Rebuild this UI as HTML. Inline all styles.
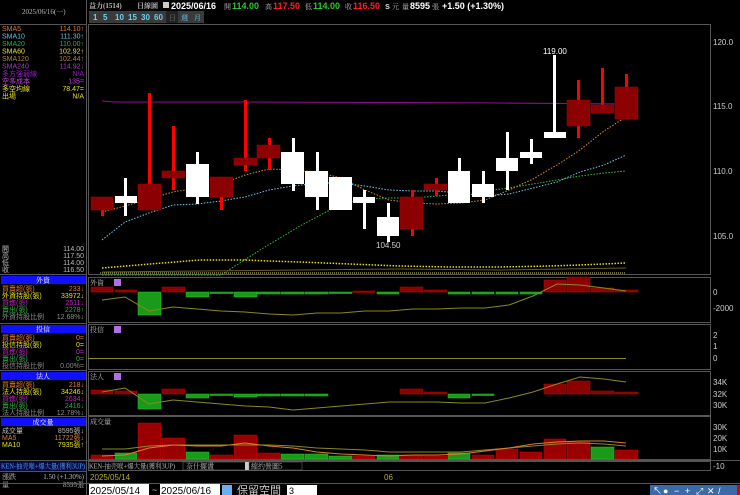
<!DOCTYPE html>
<html><head><meta charset="utf-8"><style>
html,body{margin:0;padding:0;background:#000;width:740px;height:495px;overflow:hidden}
svg text{font-family:"Liberation Sans","Noto Sans CJK TC",sans-serif}
.s{font-family:"Liberation Serif","Noto Serif CJK SC",serif;font-size:7px}
</style></head><body>
<svg width="740" height="495" viewBox="0 0 740 495" xmlns="http://www.w3.org/2000/svg">
<rect width="740" height="495" fill="#000"/>
<line x1="86.5" y1="0" x2="86.5" y2="495" stroke="#555"/>
<text x="22" y="14" class="s" fill="#bbb">2025/06/16(一)</text>
<line x1="0" y1="24.5" x2="86" y2="24.5" stroke="#555"/>
<g class="s">
<text x="2" y="31" fill="#e07a30">SMA5</text><text x="84" y="31" fill="#e07a30" text-anchor="end">114.10↑</text>
<text x="2" y="38.5" fill="#5ec8e8">SMA10</text><text x="84" y="38.5" fill="#5ec8e8" text-anchor="end">111.30↑</text>
<text x="2" y="46" fill="#2ab040">SMA20</text><text x="84" y="46" fill="#2ab040" text-anchor="end">110.00↑</text>
<text x="2" y="53.5" fill="#e8e030">SMA60</text><text x="84" y="53.5" fill="#e8e030" text-anchor="end">102.92↑</text>
<text x="2" y="61" fill="#b08040">SMA120</text><text x="84" y="61" fill="#b08040" text-anchor="end">102.44↑</text>
<text x="2" y="68.5" fill="#a040c0">SMA240</text><text x="84" y="68.5" fill="#a040c0" text-anchor="end">114.92↓</text>
<text x="2" y="76" fill="#9020c0">多方強弱線</text><text x="84" y="76" fill="#9020c0" text-anchor="end">N/A</text>
<text x="2" y="83.5" fill="#c040e0">空多成本</text><text x="84" y="83.5" fill="#c040e0" text-anchor="end">135=</text>
<text x="2" y="91" fill="#e0e020">多空均線</text><text x="84" y="91" fill="#e0e020" text-anchor="end">78.47=</text>
<text x="2" y="98.5" fill="#e0e020">出場</text><text x="84" y="98.5" fill="#e0e020" text-anchor="end">N/A</text>
<text x="2" y="251" fill="#bbb">開</text><text x="84" y="251" fill="#bbb" text-anchor="end">114.00</text>
<text x="2" y="258" fill="#bbb">高</text><text x="84" y="258" fill="#bbb" text-anchor="end">117.50</text>
<text x="2" y="265" fill="#bbb">低</text><text x="84" y="265" fill="#bbb" text-anchor="end">114.00</text>
<text x="2" y="272" fill="#bbb">收</text><text x="84" y="272" fill="#bbb" text-anchor="end">116.50</text>
</g>
<g>
<rect x="1" y="276" width="85" height="8" fill="#1010ff"/><text x="43" y="282.5" class="s" fill="#fff" text-anchor="middle">外資</text>
<rect x="1" y="325" width="85" height="8" fill="#1010ff"/><text x="43" y="331.5" class="s" fill="#fff" text-anchor="middle">投信</text>
<rect x="1" y="372" width="85" height="8" fill="#1010ff"/><text x="43" y="378.5" class="s" fill="#fff" text-anchor="middle">法人</text>
<rect x="1" y="418" width="85" height="8" fill="#1010ff"/><text x="43" y="424.5" class="s" fill="#fff" text-anchor="middle">成交量</text>
<line x1="0" y1="274.5" x2="86" y2="274.5" stroke="#555"/>
<line x1="0" y1="323.5" x2="86" y2="323.5" stroke="#555"/>
<line x1="0" y1="370.5" x2="86" y2="370.5" stroke="#555"/>
<line x1="0" y1="416.5" x2="86" y2="416.5" stroke="#555"/>
</g>
<g class="s">
<text x="2" y="291" fill="#e07a30">買賣超(張)</text><text x="84" y="291" fill="#e07a30" text-anchor="end">233↓</text>
<text x="2" y="298" fill="#e0e020">外資持股(張)</text><text x="84" y="298" fill="#e0e020" text-anchor="end">33972↓</text>
<text x="2" y="305" fill="#c020c0">買進(張)</text><text x="84" y="305" fill="#c020c0" text-anchor="end">2511↓</text>
<text x="2" y="312" fill="#2ab040">賣出(張)</text><text x="84" y="312" fill="#2ab040" text-anchor="end">2278↑</text>
<text x="2" y="319" fill="#888">外資持股比例</text><text x="84" y="319" fill="#888" text-anchor="end">12.68%↓</text>
<text x="2" y="340" fill="#e07a30">買賣超(張)</text><text x="84" y="340" fill="#e07a30" text-anchor="end">0=</text>
<text x="2" y="347" fill="#e0e020">投信持股(張)</text><text x="84" y="347" fill="#e0e020" text-anchor="end">0=</text>
<text x="2" y="354" fill="#c020c0">買進(張)</text><text x="84" y="354" fill="#c020c0" text-anchor="end">0=</text>
<text x="2" y="361" fill="#2ab040">賣出(張)</text><text x="84" y="361" fill="#2ab040" text-anchor="end">0=</text>
<text x="2" y="368" fill="#888">投信持股比例</text><text x="84" y="368" fill="#888" text-anchor="end">0.00%=</text>
<text x="2" y="387" fill="#e07a30">買賣超(張)</text><text x="84" y="387" fill="#e07a30" text-anchor="end">218↓</text>
<text x="2" y="394" fill="#e0e020">法人持股(張)</text><text x="84" y="394" fill="#e0e020" text-anchor="end">34246↓</text>
<text x="2" y="401" fill="#c020c0">買進(張)</text><text x="84" y="401" fill="#c020c0" text-anchor="end">2634↓</text>
<text x="2" y="408" fill="#2ab040">賣出(張)</text><text x="84" y="408" fill="#2ab040" text-anchor="end">2416↓</text>
<text x="2" y="415" fill="#888">法人持股比例</text><text x="84" y="415" fill="#888" text-anchor="end">12.78%↓</text>
<text x="2" y="433" fill="#bbb">成交量</text><text x="84" y="433" fill="#bbb" text-anchor="end">8595張↓</text>
<text x="2" y="440" fill="#e07a30">MA5</text><text x="84" y="440" fill="#e07a30" text-anchor="end">11722張↓</text>
<text x="2" y="447" fill="#e0e020">MA10</text><text x="84" y="447" fill="#e0e020" text-anchor="end">7935張↑</text>
</g>
<line x1="0" y1="460.5" x2="740" y2="460.5" stroke="#555"/>
<rect x="0" y="461" width="86" height="10" fill="#0a0a40"/>
<text x="1" y="468.5" class="s" fill="#4aa0ff" textLength="84" lengthAdjust="spacingAndGlyphs">KEN-抽壳喉+爆大量(獲利3UP)</text>
<line x1="0" y1="471.5" x2="86" y2="471.5" stroke="#555"/>
<text x="2" y="479" class="s" fill="#bbb">漲跌</text><text x="84" y="479" class="s" fill="#bbb" text-anchor="end">1.50 (+1.30%)</text>
<text x="2" y="487" class="s" fill="#bbb">量</text><text x="84" y="487" class="s" fill="#bbb" text-anchor="end">8595張</text>

<g font-size="9" font-weight="bold">
<text x="89" y="8" class="s" fill="#bbb">益力(1514)</text>
<text x="137" y="8" class="s" fill="#bbb">日線圖</text>
<rect x="163" y="2" width="6" height="6" fill="#ccc"/>
<text x="171" y="9" fill="#fff">2025/06/16</text>
<text x="224" y="9" class="s" fill="#bbb" font-weight="normal">開</text><text x="232" y="9" fill="#2ec82e">114.00</text>
<text x="265" y="9" class="s" fill="#bbb" font-weight="normal">高</text><text x="273" y="9" fill="#ff2020">117.50</text>
<text x="305" y="9" class="s" fill="#bbb" font-weight="normal">低</text><text x="313" y="9" fill="#2ec82e">114.00</text>
<text x="345" y="9" class="s" fill="#bbb" font-weight="normal">收</text><text x="353" y="9" fill="#ff2020">116.50</text>
<text x="385" y="9" fill="#ccc">s</text>
<text x="392" y="9" class="s" fill="#bbb" font-weight="normal">元</text>
<text x="402" y="9" class="s" fill="#bbb" font-weight="normal">量</text><text x="410" y="9" fill="#fff">8595</text>
<text x="432" y="9" class="s" fill="#bbb" font-weight="normal">張</text>
<text x="442" y="9" fill="#fff">+1.50 (+1.30%)</text>
</g>
<rect x="89" y="11" width="115" height="12" fill="#3a3a3a"/>
<g font-size="8" font-weight="bold" fill="#6ad0f0">
<text x="93" y="20">1</text><text x="103" y="20">5</text><text x="115" y="20">10</text><text x="128" y="20">15</text><text x="141" y="20">30</text><text x="154" y="20">60</text>
</g>
<rect x="166" y="11" width="12" height="12" fill="#222"/>
<text x="169" y="20" class="s" fill="#777">日</text><text x="181" y="20" class="s" fill="#6ad0f0">週</text><text x="194" y="20" class="s" fill="#6ad0f0">月</text>

<rect x="88.5" y="24.5" width="622" height="250" fill="none" stroke="#555"/>
<g font-size="8" fill="#ccc"><text x="713" y="45">120.0</text><text x="713" y="109">115.0</text><text x="713" y="174">110.0</text><text x="713" y="239">105.0</text></g>
<polyline points="102,101 115,102 200,102 250,102 400,102.5 500,103 628,104" fill="none" stroke="#901090" stroke-width="1"/>
<polyline points="102,212 125,206 149,199 173,192 197,188 221,184 245,175 269,169 293,170 317,172 341,178 365,190 389,200 413,203 437,204 461,203 485,200 509,190 533,179 557,165 580,150 604,131 626,117" fill="none" stroke="#e08a30" stroke-width="1" stroke-dasharray="1.5 1.5"/>
<polyline points="102,240 125,222 149,213 173,205 197,204 221,201 245,197 269,190 293,186 317,183 341,183 365,186 389,190 413,191 437,191 461,193 485,196 509,194 533,188 557,182 580,172 604,165 626,155" fill="none" stroke="#70c8e8" stroke-width="1" stroke-dasharray="1.5 1.5"/>
<polyline points="102,275 180,275 221,275 260,250 300,226 330,210 360,199 389,198 413,198 437,196 461,194 485,191 509,188 533,184 557,180 580,176 604,173 626,171" fill="none" stroke="#30c040" stroke-width="1" stroke-dasharray="1.5 1.5"/>
<polyline points="102,268 150,264 200,260 245,260 269,261 300,262 350,264 400,266 450,267 500,267 550,266 580,265 626,263" fill="none" stroke="#e0e020" stroke-width="1.5" stroke-dasharray="1.5 1.5"/>
<polyline points="102,272 200,271 300,270 400,269 500,270 626,268" fill="none" stroke="#6a5a30" stroke-width="1"/>
<line x1="100" y1="273" x2="626" y2="273" stroke="#909040" stroke-width="1.5" stroke-dasharray="1 1"/>
<g>
<rect x="101" y="206" width="3" height="10" fill="#f00"/><rect x="91" y="197" width="22" height="13" fill="#8b0000" stroke="#a00" stroke-width=".5"/>
<rect x="124" y="178" width="3" height="38" fill="#fff"/><rect x="115" y="196" width="22" height="7" fill="#fff"/>
<rect x="148" y="93" width="3" height="95" fill="#f00"/><rect x="138" y="184" width="23" height="26" fill="#8b0000" stroke="#a00" stroke-width=".5"/>
<rect x="172" y="126" width="3" height="64" fill="#f00"/><rect x="162" y="171" width="23" height="7" fill="#8b0000" stroke="#a00" stroke-width=".5"/>
<rect x="196" y="152" width="3" height="52" fill="#fff"/><rect x="186" y="164" width="23" height="33" fill="#fff"/>
<rect x="220" y="195" width="3" height="15" fill="#f00"/><rect x="210" y="177" width="23" height="20" fill="#8b0000" stroke="#a00" stroke-width=".5"/>
<rect x="244" y="100" width="3" height="71" fill="#f00"/><rect x="234" y="158" width="23" height="7" fill="#8b0000" stroke="#a00" stroke-width=".5"/>
<rect x="268" y="138" width="3" height="32" fill="#f00"/><rect x="257" y="145" width="23" height="13" fill="#8b0000" stroke="#a00" stroke-width=".5"/>
<rect x="292" y="138" width="3" height="53" fill="#fff"/><rect x="281" y="152" width="23" height="32" fill="#fff"/>
<rect x="316" y="152" width="3" height="58" fill="#fff"/><rect x="305" y="171" width="23" height="26" fill="#fff"/>
<rect x="329" y="177" width="23" height="33" fill="#fff"/>
<rect x="363" y="190" width="3" height="39" fill="#fff"/><rect x="353" y="197" width="22" height="6" fill="#fff"/>
<rect x="387" y="203" width="3" height="39" fill="#fff"/><rect x="377" y="217" width="22" height="19" fill="#fff"/>
<rect x="411" y="190" width="3" height="46" fill="#f00"/><rect x="400" y="197" width="23" height="32" fill="#8b0000" stroke="#a00" stroke-width=".5"/>
<rect x="435" y="178" width="3" height="18" fill="#f00"/><rect x="424" y="184" width="23" height="6" fill="#8b0000" stroke="#a00" stroke-width=".5"/>
<rect x="458" y="158" width="3" height="45" fill="#fff"/><rect x="448" y="171" width="22" height="32" fill="#fff"/>
<rect x="482" y="171" width="3" height="32" fill="#fff"/><rect x="472" y="184" width="22" height="13" fill="#fff"/>
<rect x="506" y="132" width="3" height="58" fill="#fff"/><rect x="496" y="158" width="22" height="13" fill="#fff"/>
<rect x="530" y="139" width="3" height="25" fill="#fff"/><rect x="520" y="152" width="22" height="6" fill="#fff"/>
<rect x="553" y="55" width="3" height="83" fill="#fff"/><rect x="544" y="132" width="22" height="6" fill="#fff"/>
<rect x="577" y="80" width="3" height="58" fill="#f00"/><rect x="567" y="100" width="23" height="26" fill="#8b0000" stroke="#a00" stroke-width=".5"/>
<rect x="601" y="68" width="3" height="40" fill="#f00"/><rect x="591" y="105" width="23" height="8" fill="#8b0000" stroke="#a00" stroke-width=".5"/>
<rect x="625" y="74" width="3" height="14" fill="#f00"/><rect x="615" y="87" width="23" height="32" fill="#8b0000" stroke="#a00" stroke-width=".5"/>
</g>
<text x="543" y="54" font-size="8" fill="#fff">119.00</text>
<text x="376" y="248" font-size="8" fill="#ccc">104.50</text>

<rect x="88.5" y="277.5" width="622" height="45" fill="none" stroke="#555"/>
<text x="90" y="285" class="s" fill="#bbb">外資</text><rect x="114" y="279" width="7" height="7" fill="#b070e0"/>
<g fill="#8b0000" stroke="#c00" stroke-width=".5">
<rect x="91" y="287" width="22" height="5"/><rect x="115" y="290" width="22" height="2"/><rect x="162" y="287" width="23" height="5"/>
<rect x="353" y="291" width="22" height="1.5"/><rect x="400" y="287" width="23" height="5"/><rect x="424" y="290" width="23" height="2"/>
<rect x="544" y="280" width="22" height="12"/><rect x="567" y="277" width="23" height="15"/><rect x="591" y="288" width="23" height="4"/><rect x="615" y="290" width="23" height="2"/>
</g>
<g fill="#1a9a1a" stroke="#2c2" stroke-width=".5">
<rect x="138" y="292" width="23" height="23"/><rect x="186" y="292" width="23" height="5"/><rect x="210" y="292" width="23" height="1.5"/>
<rect x="234" y="292" width="23" height="5"/><rect x="257" y="292" width="23" height="2"/><rect x="281" y="292" width="23" height="2"/>
<rect x="305" y="292" width="23" height="2"/><rect x="329" y="292" width="23" height="1.5"/><rect x="377" y="292" width="22" height="2"/>
<rect x="448" y="292" width="22" height="2"/><rect x="472" y="292" width="22" height="2"/><rect x="496" y="292" width="22" height="2"/><rect x="520" y="292" width="22" height="2"/>
</g>
<polyline points="102,300 125,297 149,311 173,307 197,309 221,311 245,312 269,314 293,315 317,313 341,313 365,311 389,311 413,309 437,309 461,308 485,308 509,305 533,296 557,284 580,285 604,288 626,291" fill="none" stroke="#8a8a20" stroke-width="1"/>
<g font-size="8" fill="#ccc"><text x="713" y="295">0</text><text x="713" y="311">-2000</text></g>

<rect x="88.5" y="324.5" width="622" height="45" fill="none" stroke="#555"/>
<text x="90" y="332" class="s" fill="#bbb">投信</text><rect x="114" y="326" width="7" height="7" fill="#b070e0"/>
<line x1="88" y1="358.5" x2="626" y2="358.5" stroke="#8a8a20"/>
<g font-size="8" fill="#ccc"><text x="713" y="338">2</text><text x="713" y="349">1</text><text x="713" y="361">0</text></g>

<rect x="88.5" y="371.5" width="622" height="44" fill="none" stroke="#555"/>
<text x="90" y="379" class="s" fill="#bbb">法人</text><rect x="114" y="373" width="7" height="7" fill="#b070e0"/>
<g fill="#8b0000" stroke="#c00" stroke-width=".5">
<rect x="91" y="390" width="22" height="4"/><rect x="115" y="391" width="22" height="3"/><rect x="162" y="389" width="23" height="5"/>
<rect x="400" y="389" width="23" height="5"/><rect x="424" y="392" width="23" height="2"/><rect x="544" y="384" width="22" height="10"/>
<rect x="567" y="381" width="23" height="13"/><rect x="591" y="391" width="23" height="3"/><rect x="615" y="392" width="23" height="2"/>
</g>
<g fill="#1a9a1a" stroke="#2c2" stroke-width=".5">
<rect x="138" y="394" width="23" height="15"/><rect x="186" y="394" width="23" height="4"/><rect x="210" y="394" width="23" height="1.5"/>
<rect x="234" y="394" width="23" height="3"/><rect x="257" y="394" width="23" height="2"/><rect x="281" y="394" width="23" height="2"/><rect x="305" y="394" width="23" height="2"/>
<rect x="448" y="394" width="22" height="4"/><rect x="472" y="394" width="22" height="1.5"/>
</g>
<polyline points="102,392 125,388 149,404 173,400 197,402 221,404 245,406 269,407 293,410 317,408 341,406 365,404 389,402 413,402 437,402 461,403 485,403 509,398 533,392 557,384 580,377 604,379 626,382" fill="none" stroke="#8a8a20" stroke-width="1"/>
<g font-size="8" fill="#ccc"><text x="713" y="385">34K</text><text x="713" y="397">32K</text><text x="713" y="408">30K</text></g>

<rect x="88.5" y="416.5" width="622" height="43" fill="none" stroke="#555"/>
<text x="90" y="424" class="s" fill="#bbb">成交量</text>
<g fill="#9b0000" stroke="#c00" stroke-width=".5">
<rect x="91" y="455" width="22" height="4"/><rect x="138" y="423" width="23" height="36"/><rect x="162" y="438" width="23" height="21"/>
<rect x="210" y="455" width="23" height="4"/><rect x="234" y="435" width="23" height="24"/><rect x="257" y="453" width="23" height="6"/>
<rect x="353" y="456" width="22" height="3"/><rect x="400" y="455" width="23" height="4"/><rect x="424" y="456" width="23" height="3"/>
<rect x="472" y="455" width="22" height="4"/><rect x="496" y="449" width="22" height="10"/><rect x="520" y="452" width="22" height="7"/>
<rect x="544" y="439" width="22" height="20"/><rect x="567" y="442" width="23" height="17"/><rect x="615" y="450" width="23" height="9"/>
</g>
<g fill="#1a9a1a" stroke="#2c2" stroke-width=".5">
<rect x="115" y="453" width="22" height="6"/><rect x="186" y="452" width="23" height="7"/><rect x="281" y="454" width="23" height="5"/>
<rect x="305" y="454" width="23" height="5"/><rect x="329" y="456" width="23" height="3"/><rect x="377" y="455" width="22" height="4"/>
<rect x="448" y="453" width="22" height="6"/><rect x="591" y="447" width="23" height="12"/>
</g>
<polyline points="102,449 125,449 149,446 173,445 197,445 221,445 245,445 269,445 293,446 317,448 341,449 365,450 389,452 413,452 437,452 461,452 485,450 509,448 533,446 557,444 580,443 604,444 626,446" fill="none" stroke="#8a8a20"/>
<polyline points="102,456 125,455 149,448 173,445 197,446 221,446 245,443 269,446 293,448 317,452 341,454 365,455 389,456 413,455 437,455 461,454 485,451 509,448 533,444 557,442 580,441 604,441 626,443" fill="none" stroke="#e07a30"/>
<g font-size="8" fill="#ccc"><text x="713" y="430">30K</text><text x="713" y="441">20K</text><text x="713" y="452">10K</text></g>

<rect x="88.5" y="461.5" width="622" height="9" fill="none" stroke="#555"/>
<text x="89" y="468.5" class="s" fill="#bbb" textLength="86" lengthAdjust="spacingAndGlyphs">KEN-抽壳喉+爆大量(獲利3UP)</text>
<rect x="183" y="462" width="63" height="8" fill="#000" stroke="#777" stroke-width=".5"/><text x="186" y="468.5" class="s" fill="#bbb">奈什擺盪</text>
<rect x="245" y="462" width="4" height="8" fill="#ccc"/>
<rect x="249" y="462" width="53" height="8" fill="#000" stroke="#777" stroke-width=".5"/><text x="251" y="468.5" class="s" fill="#bbb">縮約營圖5</text>
<text x="713" y="469" font-size="8" fill="#ccc">-10</text>
<text x="90" y="480" font-size="8" fill="#b0b020">2025/05/14</text>
<text x="384" y="480" font-size="8" fill="#b0b020">06</text>
<line x1="0" y1="483.5" x2="740" y2="483.5" stroke="#555"/>
<rect x="89" y="484" width="60" height="11" fill="#fff"/><text x="90" y="494" font-size="10" fill="#000">2025/05/14</text>
<text x="152" y="493" font-size="9" fill="#ccc">~</text>
<rect x="160" y="484" width="60" height="11" fill="#fff"/><text x="161" y="494" font-size="10" fill="#000">2025/06/16</text>
<rect x="222" y="485" width="10" height="10" fill="#6ab0f0"/>
<text x="237" y="494" font-size="11" fill="#ccc" font-family="Noto Sans CJK TC">保留空間</text>
<rect x="287" y="485" width="30" height="10" fill="#fff"/><text x="289" y="494" font-size="9" fill="#000">3</text>
<rect x="650" y="485" width="90" height="10" fill="#3a6aa8"/>
<g fill="#fff" font-size="9"><text x="653" y="494">↖</text><text x="663" y="494">●</text><text x="674" y="494">−</text><text x="685" y="494">+</text><text x="696" y="494">⤢</text><text x="707" y="494">✕</text><text x="718" y="494">/</text></g>
<rect x="737" y="485" width="3" height="10" fill="#d00"/>
</svg>
</body></html>
